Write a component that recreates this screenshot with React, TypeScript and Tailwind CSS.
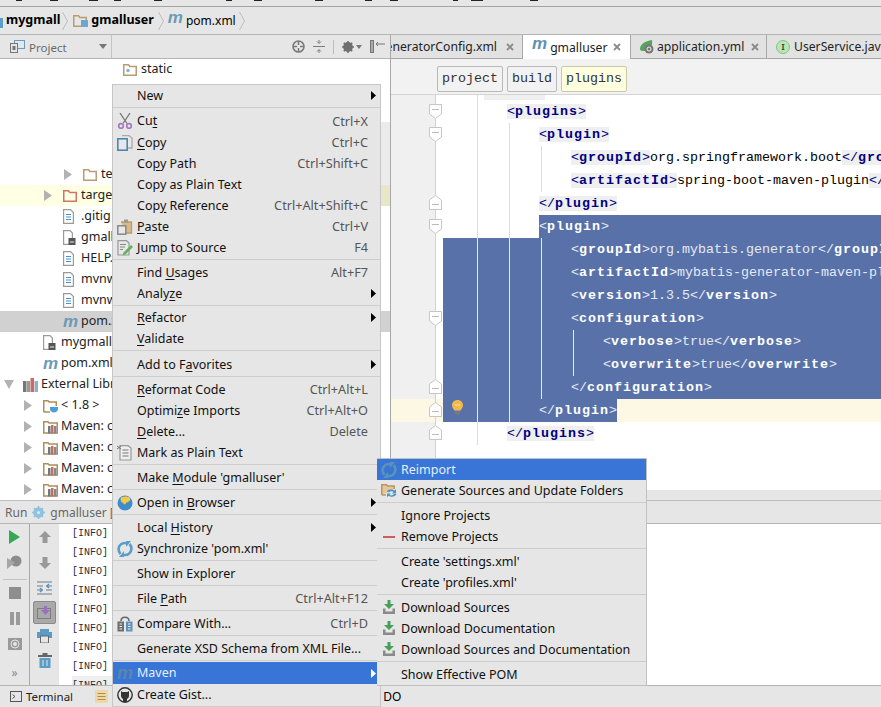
import React from "react";

const Tri = () => (
  <svg width="8" height="11" viewBox="0 0 8 11"><path d="M0 0L8 5.5L0 11Z" fill="#b2b2b2" /></svg>
);
const TriDown = () => (
  <svg width="10" height="9" viewBox="0 0 10 9"><path d="M0 0H10L5 9Z" fill="#b2b2b2" /></svg>
);
const Folder = ({ c = "#b99c6f", w = 14, h = 12, dot = false }: { c?: string; w?: number; h?: number; dot?: boolean }) => (
  <svg width={w} height={h} viewBox="0 0 14 12">
    <path d="M.75 11.25V.75H5.5L6.8 2.5H13.25V11.25Z" fill="none" stroke={c} strokeWidth="1.5" />
    {dot && <circle cx="5" cy="6.5" r="1.7" fill="#7fb3d5" />}
  </svg>
);
const Doc = () => (
  <svg width="11" height="15" viewBox="0 0 11 15">
    <path d="M.6.6H7.5L10.4 3.5V14.4H.6Z" fill="#fff" stroke="#9a9a9a" strokeWidth="1.2" />
    <path d="M3 5.5H8M3 8H8M3 10.5H8" stroke="#4a90c8" strokeWidth="1.2" />
  </svg>
);
const DocLock = () => (
  <svg width="13" height="15" viewBox="0 0 13 15">
    <path d="M.6.6H7L9.4 3V14.4H.6Z" fill="#fff" stroke="#9a9a9a" strokeWidth="1.2" />
    <rect x="5.5" y="8" width="7" height="7" fill="#555" />
    <rect x="7" y="11.5" width="4" height="1" fill="#eee" />
  </svg>
);
const M = ({ c = "#6c9ab8", size = "text-[17px]" }: { c?: string; size?: string }) => (
  <span className={"font-['Liberation_Sans'] font-bold italic leading-none " + size} style={{ color: c }}>m</span>
);
const Lib = () => (
  <svg width="15" height="14" viewBox="0 0 15 14">
    <path d="M.75 13V1.75H5L6 3H14.25V13Z" fill="none" stroke="#b08d5b" strokeWidth="1.5" />
    <rect x="5" y="6" width="2.5" height="7.5" fill="#777" />
    <rect x="8" y="5" width="2.5" height="8.5" fill="#c96a63" />
    <rect x="11" y="6" width="2.5" height="7.5" fill="#888" />
  </svg>
);
const JavaLib = () => (
  <svg width="16" height="14" viewBox="0 0 16 14">
    <path d="M.75 13V1.75H5L6 3H13.25V7" fill="none" stroke="#b08d5b" strokeWidth="1.5" />
    <path d="M.75 13H7" stroke="#b08d5b" strokeWidth="1.5" />
    <path d="M7 8H15V10C15 12 13 13.5 11 13.5S7 12 7 10Z" fill="#4a9fd8" />
  </svg>
);
const Books = () => (
  <svg width="15" height="14" viewBox="0 0 15 14">
    <rect x="0" y="3" width="3.5" height="11" fill="#777" />
    <rect x="4" y="3" width="3" height="11" fill="#999" />
    <rect x="7.5" y="0" width="3.5" height="14" fill="#c96a63" />
    <rect x="11.5" y="3" width="3.5" height="11" fill="#8fb0c9" />
  </svg>
);
const X = () => (
  <svg width="8" height="8" viewBox="0 0 8 8" className="shrink-0"><path d="M1 1L7 7M7 1L1 7" stroke="#8a8a8a" strokeWidth="1.8" /></svg>
);

const rowsData: { pl: string; arrow?: "r" | "d"; icon?: React.ReactNode; text: string; bg?: string; strip?: string; }[] = [
  { pl: "pl-[104px]", icon: <Folder dot />, text: "static" },
  { pl: "pl-[64px]", text: "" },
  { pl: "pl-[64px]", text: "" },
  { pl: "pl-[64px]", text: "", strip: "bg-[#ebebeb]" },
  { pl: "pl-[64px]", text: "", strip: "bg-[#ebebeb]" },
  { pl: "pl-[64px]", arrow: "r", icon: <Folder />, text: "te", strip: "bg-[#ebebeb]" },
  { pl: "pl-[44px]", arrow: "r", icon: <Folder c="#d0736a" />, text: "targe", bg: "bg-[#ffffe4]", strip: "bg-[#e8e8c8]" },
  { pl: "pl-[44px]", icon: <Doc />, text: ".gitig" },
  { pl: "pl-[44px]", icon: <DocLock />, text: "gmall" },
  { pl: "pl-[44px]", icon: <Doc />, text: "HELP." },
  { pl: "pl-[44px]", icon: <Doc />, text: "mvnw" },
  { pl: "pl-[44px]", icon: <Doc />, text: "mvnw" },
  { pl: "pl-[44px]", icon: <M />, text: "pom.x", bg: "bg-[#d1d1d1]" },
  { pl: "pl-[24px]", icon: <DocLock />, text: "mygmall." },
  { pl: "pl-[24px]", icon: <M />, text: "pom.xml" },
  { pl: "pl-[4px]", arrow: "d", icon: <Books />, text: "External Libr" },
  { pl: "pl-[24px]", arrow: "r", icon: <JavaLib />, text: "< 1.8 >" },
  { pl: "pl-[24px]", arrow: "r", icon: <Lib />, text: "Maven: c" },
  { pl: "pl-[24px]", arrow: "r", icon: <Lib />, text: "Maven: c" },
  { pl: "pl-[24px]", arrow: "r", icon: <Lib />, text: "Maven: c" },
  { pl: "pl-[24px]", arrow: "r", icon: <Lib />, text: "Maven: c" },
];

const Chevron = () => (
  <svg width="6" height="18" viewBox="0 0 6 18"><path d="M.5 0L5.5 9L.5 18" fill="none" stroke="#bdbdbd" /></svg>
);

/* Menu icons */
const Scissors = () => (
  <svg width="16" height="16" viewBox="0 0 16 16">
    <path d="M3 0L10 10.5M13 0L6 10.5" stroke="#777" strokeWidth="1.3" />
    <circle cx="4" cy="13" r="2.3" fill="none" stroke="#a47bbd" strokeWidth="1.7" />
    <circle cx="12" cy="13" r="2.3" fill="none" stroke="#a47bbd" strokeWidth="1.7" />
  </svg>
);
const CopyI = () => (
  <svg width="16" height="16" viewBox="0 0 16 16">
    <path d="M5 .7H12L15 3V13H11" fill="#e8e8e8" stroke="#aaa" strokeWidth="1.3" />
    <rect x=".8" y="3.8" width="9.4" height="11.4" fill="#e8e8e8" stroke="#4f86ad" strokeWidth="1.6" />
  </svg>
);
const PasteI = () => (
  <svg width="16" height="16" viewBox="0 0 16 16">
    <path d="M4 3H14.5V14H9" fill="#d9b98a" stroke="#c09a63" strokeWidth="1.3" />
    <rect x="7" y="0.5" width="4" height="3" fill="#999" />
    <rect x=".8" y="6.8" width="8" height="8.4" fill="#e8e8e8" stroke="#888" strokeWidth="1.5" />
  </svg>
);
const JumpI = () => (
  <svg width="16" height="16" viewBox="0 0 16 16">
    <path d="M1 .7H9.5L12 3V15H1Z" fill="#e8e8e8" stroke="#999" strokeWidth="1.2" />
    <path d="M3 4.5H9M3 7H8M3 9.5H6" stroke="#888" />
    <path d="M14 5L16 7L8.5 14.5L5.5 15.5L6.5 12.5Z" fill="#62b35b" />
  </svg>
);
const MarkI = () => (
  <svg width="16" height="16" viewBox="0 0 16 16">
    <path d="M3 .7H11L14 3V15H3Z" fill="#eee" stroke="#999" strokeWidth="1.2" />
    <path d="M5.5 5H11.5M5.5 8H11.5M5.5 11H11.5" stroke="#777" />
    <path d="M0 1L4 4M4 1L0 4" stroke="#777" />
  </svg>
);
const Globe = () => (
  <svg width="16" height="16" viewBox="0 0 16 16">
    <circle cx="8" cy="8" r="7.5" fill="#3d8ccb" />
    <path d="M4 2.5C7 1 11 1 13 3C14 5 12 7.5 9 7.5C9 10 7 10 6 8C4 7.5 3 5 4 2.5Z" fill="#f5c945" />
  </svg>
);
const SyncI = ({ c = "#5b9dc9" }: { c?: string }) => (
  <svg width="16" height="16" viewBox="0 0 16 16" fill="none" stroke={c} strokeWidth="2.6">
    <path d="M3.5 13C.8 10.2 1 5.5 4 3.3C6 1.8 8 1.8 9.5 2.2" />
    <path d="M12.5 3C15.2 5.8 15 10.5 12 12.7C10 14.2 8 14.2 6.5 13.8" />
    <path d="M9 0V6L14 0" fill={c} stroke="none" />
    <path d="M7 16V10L2 16" fill={c} stroke="none" />
  </svg>
);
const CompareI = () => (
  <svg width="16" height="16" viewBox="0 0 16 16">
    <path d="M4 5C4 0 12 0 12 5" fill="none" stroke="#666" strokeWidth="1.5" />
    <rect x=".5" y="5.5" width="6.5" height="10" fill="#6d6d6d" />
    <rect x="9" y="5.5" width="6.5" height="10" fill="#5b93bb" />
    <path d="M2.5 8H5M2.5 10.5H5M2.5 13H5M11 8H13.5M11 10.5H13.5M11 13H13.5" stroke="#eee" />
  </svg>
);
const GistI = () => (
  <svg width="16" height="16" viewBox="0 0 16 16">
    <circle cx="8" cy="8" r="7.2" fill="#e6e6e6" stroke="#333" strokeWidth="1.4" />
    <path d="M4 4L5.5 5H10.5L12 4V9C12 11 10 12 10 12V15H6V12C6 12 4 11 4 9Z" fill="#333" />
  </svg>
);
const GenI = () => (
  <svg width="16" height="15" viewBox="0 0 16 15">
    <path d="M.75 12V1.75H5.5L6.5 3H13.25V6" fill="#e3c79b" stroke="#b89763" strokeWidth="1.5" />
    <path d="M.75 12H5" stroke="#b89763" strokeWidth="1.5" />
    <path d="M6 8.5C7 6 12 6 13 7.5L15 6.5V10.5H11L12.5 9C11.5 8 9 8 8 9.5Z" fill="#4d94c4" />
    <path d="M15.5 11C14.5 14 9.5 14.5 8 12.8L6 14V10.5H10L8.5 11.7C9.5 13 12 12.5 13 11Z" fill="#4d94c4" />
  </svg>
);
const DlI = () => (
  <svg width="14" height="15" viewBox="0 0 14 15">
    <path d="M5.5 0H8.5V4H12L7 9L2 4H5.5Z" fill="#46a05a" />
    <path d="M1 8.5V14H13V8.5H10.5V11.5H3.5V8.5Z" fill="#8a8a8a" />
  </svg>
);
const Dash = () => <div className="w-3 h-[2px] bg-[#c8605a]" />;

type It = { t: React.ReactNode; k?: string; icon?: React.ReactNode; arrow?: boolean; hi?: boolean; h?: string };
type Entry = It | { sep: string };

const U = ({ children }: { children: React.ReactNode }) => <u className="underline-offset-2">{children}</u>;

const mainMenu: Entry[] = [
  { t: "New", arrow: true },
  { sep: "h-[4px]" },
  { t: <>Cu<U>t</U></>, k: "Ctrl+X", icon: <Scissors />, h: "h-[22px]" },
  { t: <><U>C</U>opy</>, k: "Ctrl+C", icon: <CopyI /> },
  { t: <>Co<U>p</U>y Path</>, k: "Ctrl+Shift+C" },
  { t: "Copy as Plain Text" },
  { t: <>Cop<U>y</U> Reference</>, k: "Ctrl+Alt+Shift+C" },
  { t: <><U>P</U>aste</>, k: "Ctrl+V", icon: <PasteI /> },
  { t: "Jump to Source", k: "F4", icon: <JumpI /> },
  { sep: "h-[4px]" },
  { t: <>Find <U>U</U>sages</>, k: "Alt+F7" },
  { t: <>Analy<U>z</U>e</>, arrow: true },
  { sep: "h-[3px]" },
  { t: <><U>R</U>efactor</>, arrow: true },
  { t: <><U>V</U>alidate</> },
  { sep: "h-[5px]" },
  { t: <>Add to F<U>a</U>vorites</>, arrow: true },
  { sep: "h-[4px]" },
  { t: <><U>R</U>eformat Code</>, k: "Ctrl+Alt+L" },
  { t: <>Optimi<U>z</U>e Imports</>, k: "Ctrl+Alt+O" },
  { t: <><U>D</U>elete...</>, k: "Delete" },
  { t: "Mark as Plain Text", icon: <MarkI /> },
  { sep: "h-[4px]" },
  { t: <>Make <U>M</U>odule 'gmalluser'</> },
  { sep: "h-[4px]" },
  { t: <>Open in <U>B</U>rowser</>, arrow: true, icon: <Globe /> },
  { sep: "h-[4px]" },
  { t: <>Local <U>H</U>istory</>, arrow: true },
  { t: "Synchronize 'pom.xml'", icon: <SyncI /> },
  { sep: "h-[4px]" },
  { t: "Show in Explorer" },
  { sep: "h-[4px]" },
  { t: <>File <U>P</U>ath</>, k: "Ctrl+Alt+F12" },
  { sep: "h-[4px]" },
  { t: "Compare With...", k: "Ctrl+D", icon: <CompareI /> },
  { sep: "h-[4px]" },
  { t: "Generate XSD Schema from XML File..." },
  { sep: "h-[3px]" },
  { t: "Maven", arrow: true, hi: true, h: "h-[22px]", icon: <M c="#5b86a8" size="text-[18px]" /> },
  { t: "Create Gist...", icon: <GistI /> },
  { sep: "h-[4px]" },
];

const subMenu: Entry[] = [
  { t: "Reimport", hi: true, icon: <SyncI c="#5a93b4" /> },
  { t: "Generate Sources and Update Folders", icon: <GenI /> },
  { sep: "h-[4px]" },
  { t: "Ignore Projects" },
  { t: "Remove Projects", icon: <Dash /> },
  { sep: "h-[4px]" },
  { t: "Create 'settings.xml'" },
  { t: "Create 'profiles.xml'" },
  { sep: "h-[4px]" },
  { t: "Download Sources", icon: <DlI /> },
  { t: "Download Documentation", icon: <DlI /> },
  { t: "Download Sources and Documentation", icon: <DlI /> },
  { sep: "h-[4px]" },
  { t: "Show Effective POM" },
];

const MenuRows = ({ items, textPad }: { items: Entry[]; textPad: string }) => (
  <>
    {items.map((e, i) =>
      "sep" in e ? (
        <div key={i} className={e.sep + " pt-px"}><div className="h-px bg-[#cdcdcd]" /></div>
      ) : (
        <div key={i} className={(e.h ?? "h-[21px]") + " flex items-center whitespace-nowrap " + (e.hi ? "bg-[#3875d7] text-[#e6eefc]" : "text-[#111]")}>
          <div className="w-[24px] shrink-0 flex justify-center items-center">{e.icon}</div>
          <div className={"flex-1 " + textPad}>{e.t}</div>
          {e.k && <div className={"pr-3 text-[#555] text-[12.7px] " + textPad}>{e.k}</div>}
          {e.arrow && (
            <svg className="mr-[4px]" width="5" height="9" viewBox="0 0 5 9"><path d="M0 0L5 4.5L0 9Z" fill={e.hi ? "#fff" : "#000"} /></svg>
          )}
        </div>
      )
    )}
  </>
);

/* Editor */
const Tag = ({ n, close, sel, hl = true, tail = ">" }: { n: string; close?: boolean; sel?: boolean; hl?: boolean; tail?: string }) => (
  <span className={sel ? "text-[#e4e9f5]" : "text-[#000080] " + (hl ? "bg-[#efefef]" : "")}>
    {"<" + (close ? "/" : "")}
    <b className={"tracking-[1px] " + (sel ? "text-white" : "")}>{n}</b>
    {tail}
  </span>
);
const Val = ({ v, sel }: { v: string; sel?: boolean }) => <span className={sel ? "text-[#e4e9f5]" : "text-black"}>{v}</span>;

const Line = ({ pl, children }: { pl: string; children: React.ReactNode }) => (
  <div className={"h-[23px] leading-[23px] whitespace-pre overflow-hidden " + pl}>{children}</div>
);
const SelLine = ({ pl, children }: { pl: string; children: React.ReactNode }) => (
  <div className="h-[23px] pl-[7px]">
    <div className={"h-[23px] leading-[23px] whitespace-pre overflow-hidden bg-[#5872a9] " + pl}>{children}</div>
  </div>
);

const Fold = ({ up, cls }: { up?: boolean; cls: string }) => (
  <svg className={"absolute left-[429px] " + cls} width="13" height="15" viewBox="0 0 13 15">
    <path d={up ? "M.5 14.5V5L6.5 .5L12.5 5V14.5Z" : "M.5 .5H12.5V10L6.5 14.5L.5 10Z"} fill="#fff" stroke="#c6c6c6" />
    <path d={up ? "M3 9.5H10" : "M3 5.5H10"} stroke="#bbb" />
  </svg>
);
const Guide = ({ cls }: { cls: string }) => <div className={"absolute w-px " + cls} />;

const ToolBtn = ({ children, cls = "" }: { children: React.ReactNode; cls?: string }) => (
  <div className={"flex items-center justify-center shrink-0 " + cls}>{children}</div>
);

export default function App() {
  return (
    <div className="relative w-[881px] h-[707px] overflow-hidden bg-[#e6e6e6] font-['Noto_Sans',sans-serif] text-[12.5px] text-black flex flex-col">
      {/* top remnants of the menu bar */}
      <div className="h-[7px] shrink-0 border-b border-[#a3a3a3] relative">
        {[
          "left-[16px] w-[6px]", "left-[50px] w-[8px]", "left-[89px] w-[9px]", "left-[114px] w-[7px]", "left-[154px] w-[8px]",
          "left-[226px] w-[6px]", "left-[254px] w-[8px]", "left-[315px] w-[8px]", "left-[365px] w-[7px]", "left-[390px] w-[8px]",
          "left-[453px] w-[5px]", "left-[471px] w-[12px]", "left-[530px] w-[8px]",
        ].map((c) => (
          <div key={c} className={"absolute top-0 h-px bg-[#222] " + c} />
        ))}
      </div>
      {/* breadcrumb */}
      <div className="h-[28px] shrink-0 border-b border-[#b5b5b5] flex items-center text-[12.5px] text-black">
        <div className="w-[3px] h-[10px] mt-1 bg-[#5ba0cc]" />
        <b className="ml-[3px] font-bold">mygmall</b>
        <span className="ml-[2px]"><Chevron /></span>
        <span className="ml-[5px] relative">
          <Folder w={14} h={12} />
          <span className="absolute right-[-1px] bottom-0 w-[7px] h-[7px] bg-[#68a8d2]" />
        </span>
        <b className="ml-[4px] font-bold">gmalluser</b>
        <span className="ml-[4px]"><Chevron /></span>
        <span className="ml-[4px] pb-1"><M /></span>
        <span className="ml-[3px] text-[12px]">pom.xml</span>
        <span className="ml-[3px]"><Chevron /></span>
      </div>

      {/* main */}
      <div className="h-[455px] shrink-0 flex relative z-10">
        {/* project panel */}
        <div className="w-[391px] shrink-0 border-r border-[#a8a8a8] flex flex-col">
          <div className="h-[24px] shrink-0 border-b border-[#b5b5b5] flex items-center">
            <div className="w-[112px] h-full border-r border-[#c4c4c4] flex items-center pl-[10px] text-[#6a6a6a] text-[11.5px]">
              <svg width="15" height="13" viewBox="0 0 15 13">
                <rect x="4.5" y=".5" width="10" height="8" fill="#dfe8ef" stroke="#6f9ab8" />
                <rect x=".5" y="3.5" width="7" height="9" fill="#e6e6e6" stroke="#777" />
                <rect x="2.5" y="6" width="3" height="4" fill="#777" />
              </svg>
              <span className="ml-[4px] pt-[2px]">Project</span>
              <svg className="ml-[32px]" width="8" height="5" viewBox="0 0 8 5"><path d="M0 0H8L4 5Z" fill="#777" /></svg>
            </div>
            <div className="ml-[180px] flex items-center">
              <svg width="13" height="13" viewBox="0 0 13 13" fill="none" stroke="#7b7b7b" strokeWidth="1.6">
                <circle cx="6.5" cy="6.5" r="5.5" /><path d="M6.5 1V5M6.5 8V12M1 6.5H5M8 6.5H12" />
              </svg>
              <svg className="ml-[8px]" width="12" height="13" viewBox="0 0 12 13" fill="none" stroke="#7b7b7b">
                <path d="M0 6.5H12M6 0V3M4 1.5L6 3.5L8 1.5M6 13V10M4 11.5L6 9.5L8 11.5" />
              </svg>
              <div className="ml-[8px] h-[14px] w-px bg-[#bdbdbd]" />
              <svg className="ml-[8px]" width="12" height="12" viewBox="0 0 12 12">
                <circle cx="6" cy="6" r="3.6" fill="none" stroke="#6f6f6f" strokeWidth="2.6" />
                <path d="M6 0V12M0 6H12M1.8 1.8L10.2 10.2M10.2 1.8L1.8 10.2" stroke="#6f6f6f" strokeWidth="1.6" />
              </svg>
              <svg className="ml-[2px]" width="6" height="4" viewBox="0 0 6 4"><path d="M0 0H6L3 4Z" fill="#777" /></svg>
              <svg className="ml-[8px]" width="15" height="13" viewBox="0 0 15 13" fill="none" stroke="#777">
                <rect x=".5" y=".5" width="3" height="12" fill="#aaa" /><path d="M6 4H15M6 4L8 2M6 4L8 6" />
              </svg>
            </div>
          </div>
          <div className="flex-1 bg-white flex flex-col">
            {rowsData.map((r, i) => (
              <div key={i} className={"h-[21px] shrink-0 flex items-center justify-between " + (r.bg ?? "")}>
                <div className={"flex items-center " + r.pl}>
                  <div className="w-[19px] shrink-0 flex items-center">{r.arrow === "r" ? <Tri /> : r.arrow === "d" ? <TriDown /> : null}</div>
                  <div className="w-[18px] shrink-0 flex items-center h-[21px]">{r.icon}</div>
                  <span className="text-[12.5px] text-[#222] whitespace-pre">{r.text}</span>
                </div>
                {r.strip && <div className={"w-[10px] h-full " + r.strip} />}
              </div>
            ))}
          </div>
        </div>

        {/* editor side */}
        <div className="flex-1 min-w-0 flex flex-col">
          {/* tabs */}
          <div className="h-[24px] shrink-0 flex text-[12.2px] text-[#222] whitespace-nowrap overflow-hidden">
            <div className="w-[132px] shrink-0 border-r border-b border-[#a8a8a8] flex items-center bg-[#e2e2e2]">
              <div className="w-[106px] shrink-0 overflow-hidden flex justify-end"><span className="shrink-0 pt-[2px]">generatorConfig.xml</span></div>
              <span className="ml-[9px]"><X /></span>
            </div>
            <div className="w-[107px] shrink-0 bg-white flex items-center pl-[9px]">
              <span className="pb-1"><M c="#5f92b5" /></span>
              <span className="ml-[3px] pt-[2px]">gmalluser</span>
              <span className="ml-[6px]"><X /></span>
            </div>
            <div className="w-[137px] shrink-0 border-x border-b border-[#a8a8a8] bg-[#e2e2e2] flex items-center pl-[8px]">
              <svg width="15" height="14" viewBox="0 0 15 14">
                <path d="M1 9C1 4 6 1 13 0C14 6 11 11 6 11C3 11 1 11 1 9Z" fill="#58a35e" />
                <circle cx="10" cy="9" r="4.5" fill="#777" />
                <circle cx="10" cy="9" r="2" fill="none" stroke="#eee" />
              </svg>
              <span className="ml-[3px] pt-[2px]">application.yml</span>
              <span className="ml-[7px]"><X /></span>
            </div>
            <div className="flex-1 border-b border-[#a8a8a8] bg-[#e2e2e2] flex items-center pl-[9px]">
              <span className="w-[14px] h-[14px] rounded-full bg-[#b9e6b4] border border-[#7cc77a] text-[8px] leading-[12px] text-center text-[#444] font-bold shrink-0">I</span>
              <span className="ml-[4px] pt-[2px]">UserService.java</span>
            </div>
          </div>
          {/* xml path */}
          <div className="h-[36px] shrink-0 bg-[#f2f2f2] border-b border-[#d4d4d4] flex items-center pl-[46px] pt-[4px] gap-[4px] font-['Liberation_Mono'] text-[13.33px] text-[#333]">
            <div className="h-[26px] px-[4px] flex items-center border border-[#b9b9b9] rounded-[2px]">project</div>
            <div className="h-[26px] px-[4px] flex items-center border border-[#b9b9b9] rounded-[2px]">build</div>
            <div className="h-[26px] px-[4px] flex items-center border border-[#c9c9a8] rounded-[2px] bg-[#ffffdf]">plugins</div>
          </div>
          {/* code */}
          <div className="flex-1 flex bg-white font-['Liberation_Mono'] text-[13.33px] overflow-hidden">
            <div className="w-[45px] shrink-0 bg-[#f0f0f0] border-r border-[#d2d2d2] flex flex-col">
              <div className="h-[304px] shrink-0" />
              <div className="h-[23px] shrink-0 bg-[#fdf8e3]" />
            </div>
            <div className="flex-1 min-w-0 flex flex-col">
              <div className="h-[5px] shrink-0 pl-[48px]"><div className="w-[61px] h-full bg-[#efefef]" /></div>
              <Line pl="pl-[71px]"><Tag n="plugins" /></Line>
              <Line pl="pl-[103px]"><Tag n="plugin" /></Line>
              <Line pl="pl-[135px]"><Tag n="groupId" /><Val v="org.springframework.boot" /><Tag n="groupId" close tail="" /></Line>
              <Line pl="pl-[135px]"><Tag n="artifactId" /><Val v="spring-boot-maven-plugin" /><Tag n="artifactId" close tail="" /></Line>
              <Line pl="pl-[103px]"><Tag n="plugin" close /></Line>
              <div className="h-[23px] pl-[103px]">
                <div className="h-[23px] leading-[23px] bg-[#5872a9]"><Tag n="plugin" sel /></div>
              </div>
              <SelLine pl="pl-[128px]"><Tag n="groupId" sel /><Val sel v="org.mybatis.generator" /><Tag n="groupId" close sel /></SelLine>
              <SelLine pl="pl-[128px]"><Tag n="artifactId" sel /><Val sel v="mybatis-generator-maven-plugin" /><Tag n="artifactId" close sel /></SelLine>
              <SelLine pl="pl-[128px]"><Tag n="version" sel /><Val sel v="1.3.5" /><Tag n="version" close sel /></SelLine>
              <SelLine pl="pl-[128px]"><Tag n="configuration" sel /></SelLine>
              <SelLine pl="pl-[160px]"><Tag n="verbose" sel /><Val sel v="true" /><Tag n="verbose" close sel /></SelLine>
              <SelLine pl="pl-[160px]"><Tag n="overwrite" sel /><Val sel v="true" /><Tag n="overwrite" close sel /></SelLine>
              <SelLine pl="pl-[128px]"><Tag n="configuration" close sel /></SelLine>
              <div className="h-[23px] pl-[7px] flex bg-[#fdf8e3]">
                <div className="w-[174px] h-[23px] leading-[23px] pl-[96px] whitespace-pre bg-[#5872a9]"><Tag n="plugin" close sel /></div>
              </div>
              <Line pl="pl-[71px]"><Tag n="plugins" close /></Line>
            </div>
          </div>
        </div>
      </div>

      {/* run panel */}
      <div className="flex-1 min-h-0 flex flex-col">
        <div className="h-[10px] shrink-0 border-b border-[#bdbdbd] box-content" />
        <div className="h-[23px] shrink-0 border-b border-[#b5b5b5] flex items-center pl-[5px] pt-px text-[#666] text-[12px] whitespace-nowrap">
          <span>Run</span>
          <svg className="ml-[5px]" width="13" height="13" viewBox="0 0 13 13">
            <circle cx="6.5" cy="6.5" r="3.8" fill="none" stroke="#8fc0dd" strokeWidth="3" />
            <path d="M6.5 0V13M0 6.5H13M2 2L11 11M11 2L2 11" stroke="#8fc0dd" strokeWidth="1.5" />
            <circle cx="6.5" cy="6.5" r="1.5" fill="#e6e6e6" />
          </svg>
          <span className="ml-[5px]">gmalluser [c</span>
        </div>
        <div className="flex-1 min-h-0 flex border-b border-[#b5b5b5]">
          <div className="w-[30px] shrink-0 border-r border-[#a8a8a8] flex flex-col items-center">
            <ToolBtn cls="h-[26px]">
              <svg width="11" height="14" viewBox="0 0 11 14"><path d="M0 0L11 7L0 14Z" fill="#34a853" /></svg>
            </ToolBtn>
            <ToolBtn cls="h-[25px]">
              <svg width="15" height="15" viewBox="0 0 15 15"><circle cx="9" cy="6" r="5.5" fill="#8c8c8c" /><path d="M0 3L8 7.5L0 14Z" fill="#a6a6a6" /></svg>
            </ToolBtn>
            <div className="w-[24px] h-px bg-[#c4c4c4] my-[4px] shrink-0" />
            <ToolBtn cls="h-[18px]"><div className="w-[12px] h-[12px] bg-[#8e8e8e]" /></ToolBtn>
            <ToolBtn cls="h-[24px] mt-[4px] gap-[2px]"><div className="w-[4px] h-[13px] bg-[#9a9a9a]" /><div className="w-[4px] h-[13px] bg-[#9a9a9a]" /></ToolBtn>
            <ToolBtn cls="h-[24px] mt-px">
              <svg width="14" height="13" viewBox="0 0 14 13"><rect y="1" width="14" height="12" fill="#9a9a9a" /><circle cx="7" cy="7" r="4" fill="none" stroke="#e6e6e6" /><circle cx="7" cy="7" r="2" fill="#e6e6e6" /></svg>
            </ToolBtn>
            <ToolBtn cls="h-[20px] mt-[8px] text-[#888] text-[12px]">»</ToolBtn>
          </div>
          <div className="w-[29px] shrink-0 flex flex-col items-center">
            <ToolBtn cls="h-[26px]">
              <svg width="12" height="12" viewBox="0 0 12 12"><path d="M6 0L12 6H8.5V12H3.5V6H0Z" fill="#999" /></svg>
            </ToolBtn>
            <ToolBtn cls="h-[25px]">
              <svg width="12" height="12" viewBox="0 0 12 12"><path d="M6 12L12 6H8.5V0H3.5V6H0Z" fill="#999" /></svg>
            </ToolBtn>
            <ToolBtn cls="h-[25px]">
              <svg width="15" height="14" viewBox="0 0 15 14" fill="none" stroke="#6f7f8a">
                <path d="M0 1H15M0 13H15M0 5H6M9 5H15M0 9H6M9 9H15" />
                <path d="M12 3L10 5L12 7M3 7L5 9L3 11" stroke="#4a90c8" strokeWidth="1.4" />
              </svg>
            </ToolBtn>
            <ToolBtn cls="h-[23px] w-[23px] mt-[1px] bg-[#a9a9a9] border border-[#8a8a8a] rounded-[2px]">
              <svg width="15" height="13" viewBox="0 0 15 13">
                <rect x=".5" y="2.5" width="13" height="10" fill="none" stroke="#7d7d7d" />
                <path d="M7 0H10V4H13L8.5 9L4 4H7Z" fill="#9a6fc0" />
              </svg>
            </ToolBtn>
            <ToolBtn cls="h-[24px]">
              <svg width="15" height="14" viewBox="0 0 15 14">
                <rect x="3" y="0" width="9" height="3" fill="#5a9cc5" />
                <rect x="0" y="3" width="15" height="6" fill="#5a9cc5" />
                <rect x="3.5" y="7" width="8" height="7" fill="#e6e6e6" stroke="#666" />
              </svg>
            </ToolBtn>
            <ToolBtn cls="h-[25px]">
              <svg width="14" height="15" viewBox="0 0 14 15">
                <rect x="4.5" y="0" width="5" height="2" fill="#666" />
                <rect x="0" y="2" width="14" height="2" fill="#666" />
                <path d="M1.5 5H12.5V15H1.5Z" fill="#5a9cc5" />
                <path d="M5 7V13M9 7V13" stroke="#e6e6e6" />
              </svg>
            </ToolBtn>
          </div>
          <div className="flex-1 bg-white pl-[13px] font-['Liberation_Mono'] text-[10px] text-[#2b2b3a] overflow-hidden">
            {[0, 1, 2, 3, 4, 5, 6, 7].map((i) => (
              <div key={i} className="h-[19px] leading-[18px] pt-px">[INFO]</div>
            ))}
            <div className="h-[19px] leading-[18px] pt-px bg-[#eeeeee] w-[60px]">[INFO]</div>
          </div>
        </div>
        {/* status */}
        <div className="h-[21px] shrink-0 flex items-center pl-[10px] text-[11.5px] text-[#222] whitespace-nowrap">
          <svg width="12" height="11" viewBox="0 0 12 11"><rect x=".5" y=".5" width="11" height="10" fill="#e6e6e6" stroke="#555" /><path d="M2.5 3.5L5 5.5L2.5 7.5" fill="none" stroke="#555" /></svg>
          <span className="ml-[4px]">Terminal</span>
          <svg className="ml-[22px]" width="13" height="13" viewBox="0 0 13 13"><rect width="13" height="13" fill="#edd9a8" /><path d="M2.5 3.5H10.5M2.5 6.5H10.5M2.5 9.5H10.5" stroke="#b48a45" /></svg>
          <span className="ml-[4px]">g</span>
          <span className="ml-[264px] text-[12px] text-black">DO</span>
        </div>
      </div>

      {/* context menu */}
      <div className="absolute z-20 left-[112px] top-[84px] w-[269px] bg-[#e6e6e6] border border-[#c6c6c6] border-b-0 text-[12.5px]">
        <MenuRows items={mainMenu} textPad="pt-px" />
      </div>
      {/* submenu */}
      <div className="absolute z-30 left-[377px] top-[458px] w-[270px] bg-[#e6e6e6] border border-[#c0c0c0] border-l-0 text-[12.5px]">
        <MenuRows items={subMenu} textPad="pt-[2px]" />
      </div>

      {/* editor overlays: fold marks, indent guides, bulb */}
      <div className="absolute inset-0 z-[15] pointer-events-none">
        <Guide cls="left-[477px] top-[95px] h-[143px] bg-[#dcdcdc]" />
        <Guide cls="left-[477px] top-[238px] h-[184px] bg-[#e4e9f5]" />
        <Guide cls="left-[477px] top-[422px] h-[23px] bg-[#dcdcdc]" />
        <Guide cls="left-[509px] top-[123px] h-[115px] bg-[#dcdcdc]" />
        <Guide cls="left-[509px] top-[238px] h-[184px] bg-[#e4e9f5]" />
        <Guide cls="left-[541px] top-[146px] h-[46px] bg-[#dcdcdc]" />
        <Guide cls="left-[541px] top-[238px] h-[161px] bg-[#e4e9f5]" />
        <Guide cls="left-[573px] top-[330px] h-[46px] bg-[#e4e9f5]" />
        <Fold cls="top-[104px]" />
        <Fold cls="top-[127px]" />
        <Fold up cls="top-[195px]" />
        <Fold cls="top-[219px]" />
        <Fold cls="top-[311px]" />
        <Fold up cls="top-[379px]" />
        <Fold up cls="top-[402px]" />
        <Fold up cls="top-[425px]" />
        <svg className="absolute left-[452px] top-[400px]" width="11" height="15" viewBox="0 0 11 15">
          <path d="M5.5 0C8.6 0 11 2.2 11 5.2C11 7.4 9.6 8.4 8.6 10.5H2.4C1.4 8.4 0 7.4 0 5.2C0 2.2 2.4 0 5.5 0Z" fill="#f3b94e" />
          <path d="M3 4L4.2 5.8L5.5 4L6.8 5.8L8 4" fill="none" stroke="#fbe3a8" strokeWidth=".9" />
          <rect x="3" y="11" width="5" height="3.5" fill="#7a7a7a" />
        </svg>
      </div>
    </div>
  );
}
